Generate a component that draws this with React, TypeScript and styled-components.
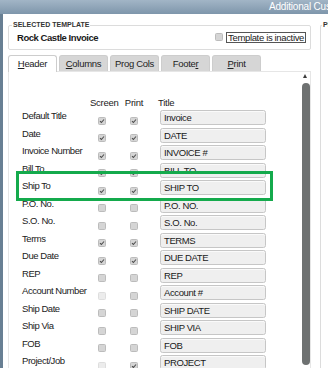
import styled, { createGlobalStyle } from 'styled-components';

type Mark = 'on' | 'off' | 'dim';

type FieldRow = {
  label: string;
  screen: Mark;
  print: Mark;
  title: string;
};

const rows: FieldRow[] = [
  { label: 'Default Title', screen: 'on', print: 'on', title: 'Invoice' },
  { label: 'Date', screen: 'on', print: 'on', title: 'DATE' },
  { label: 'Invoice Number', screen: 'on', print: 'on', title: 'INVOICE #' },
  { label: 'Bill To', screen: 'on', print: 'on', title: 'BILL TO' },
  { label: 'Ship To', screen: 'on', print: 'on', title: 'SHIP TO' },
  { label: 'P.O. No.', screen: 'off', print: 'off', title: 'P.O. NO.' },
  { label: 'S.O. No.', screen: 'off', print: 'off', title: 'S.O. No.' },
  { label: 'Terms', screen: 'on', print: 'on', title: 'TERMS' },
  { label: 'Due Date', screen: 'on', print: 'on', title: 'DUE DATE' },
  { label: 'REP', screen: 'off', print: 'off', title: 'REP' },
  { label: 'Account Number', screen: 'dim', print: 'off', title: 'Account #' },
  { label: 'Ship Date', screen: 'off', print: 'off', title: 'SHIP DATE' },
  { label: 'Ship Via', screen: 'off', print: 'off', title: 'SHIP VIA' },
  { label: 'FOB', screen: 'off', print: 'off', title: 'FOB' },
  { label: 'Project/Job', screen: 'dim', print: 'on', title: 'PROJECT' },
];

const tabs = [
  { key: 'header', node: <><u>H</u>eader</> },
  { key: 'columns', node: <><u>C</u>olumns</> },
  { key: 'prog', node: <>Pro<u>g</u> Cols</> },
  { key: 'footer', node: <>Foote<u>r</u></> },
  { key: 'print', node: <><u>P</u>rint</> },
];

const Check = ({ state }: { state: Mark }) => (
  <StyledUi.Box $state={state}>
    {state === 'on' && (
      <svg width="6" height="6" viewBox="0 0 6 6">
        <path d="M1 3.1 L2.4 4.5 L5 1.5" stroke="#4d4d4d" strokeWidth="1.1" fill="none" />
      </svg>
    )}
  </StyledUi.Box>
);

export default function App() {
  return (
    <>
      <GlobalStyle />
      <StyledUi.Window>
        <StyledUi.TitleBar>Additional Customization</StyledUi.TitleBar>
        <StyledUi.Body>
          <StyledUi.Main>
            <StyledUi.Group>
              <StyledUi.Legend>SELECTED TEMPLATE</StyledUi.Legend>
              <StyledUi.TemplateRow>
                <StyledUi.TemplateName>Rock Castle Invoice</StyledUi.TemplateName>
                <StyledUi.Inactive>
                  <Check state="off" />
                  <StyledUi.InactiveLabel>Template is inactive</StyledUi.InactiveLabel>
                </StyledUi.Inactive>
              </StyledUi.TemplateRow>
            </StyledUi.Group>

            <StyledUi.Tabs>
              {tabs.map((t, i) => (
                <StyledUi.Tab key={t.key} $active={i === 0}>
                  {t.node}
                </StyledUi.Tab>
              ))}
            </StyledUi.Tabs>

            <StyledUi.Panel>
              <StyledUi.Grid>
                <span />
                <StyledUi.HeadCell>Screen</StyledUi.HeadCell>
                <StyledUi.HeadCell>Print</StyledUi.HeadCell>
                <StyledUi.HeadCell $left>Title</StyledUi.HeadCell>
                {rows.map((r) => (
                  <StyledUi.Row key={r.label}>
                    <StyledUi.Label>{r.label}</StyledUi.Label>
                    <StyledUi.CheckCell>
                      <Check state={r.screen} />
                    </StyledUi.CheckCell>
                    <StyledUi.CheckCell>
                      <Check state={r.print} />
                    </StyledUi.CheckCell>
                    <StyledUi.TitleField>{r.title}</StyledUi.TitleField>
                  </StyledUi.Row>
                ))}
              </StyledUi.Grid>
              <StyledUi.Scrollbar>
                <StyledUi.Arrow />
                <StyledUi.Thumb />
              </StyledUi.Scrollbar>
            </StyledUi.Panel>
          </StyledUi.Main>

          <StyledUi.Side>
            <StyledUi.SideGroup>
              <StyledUi.Legend>PREVIEW</StyledUi.Legend>
            </StyledUi.SideGroup>
          </StyledUi.Side>
        </StyledUi.Body>

        <StyledUi.Highlight />
      </StyledUi.Window>
    </>
  );
}

const GlobalStyle = createGlobalStyle`
  body {
    margin: 0;
    background: #fff;
  }
`;

const StyledUi = {
  Window: styled.div`
    position: relative;
    display: flex;
    flex-direction: column;
    width: 328px;
    height: 368px;
    overflow: hidden;
    background: #fff;
    font-family: 'Liberation Sans', Arial, sans-serif;
    color: #222;
  `,
  TitleBar: styled.div`
    flex-shrink: 0;
    height: 14px;
    padding-left: 269px;
    background: linear-gradient(#a2b5c6, #7e96ab);
    color: #fff;
    font-size: 10px;
    line-height: 14px;
    letter-spacing: -0.2px;
    white-space: nowrap;
  `,
  Body: styled.div`
    flex: 1;
    display: flex;
    min-height: 0;
    border-left: 3px solid #687f93;
  `,
  Main: styled.div`
    display: flex;
    flex-direction: column;
    width: 313px;
    flex-shrink: 0;
    padding: 7px 5px 0;
    box-sizing: border-box;
  `,
  Group: styled.fieldset`
    margin: 0;
    padding: 2px 4px 6px 3px;
    min-width: 0;
    border: 1px solid #dcdcdc;
    border-radius: 2px;
  `,
  Legend: styled.legend`
    padding: 0 1px;
    font-size: 7px;
    line-height: 8px;
    font-weight: bold;
    color: #333;
    white-space: nowrap;
  `,
  TemplateRow: styled.div`
    display: flex;
    align-items: center;
    justify-content: space-between;
    height: 12px;
    padding-left: 5px;
  `,
  TemplateName: styled.span`
    font-size: 9.5px;
    font-weight: bold;
    letter-spacing: -0.45px;
    color: #1a1a1a;
  `,
  Inactive: styled.div`
    display: flex;
    align-items: center;
    gap: 3px;
  `,
  InactiveLabel: styled.span`
    height: 9px;
    padding: 0 1px;
    border: 1px solid #555;
    font-size: 9.5px;
    line-height: 9px;
    letter-spacing: -0.35px;
    color: #222;
  `,
  Tabs: styled.div`
    display: flex;
    gap: 2px;
    height: 16px;
    margin-top: 5px;
    position: relative;
    z-index: 1;
  `,
  Tab: styled.div<{ $active?: boolean }>`
    width: 49px;
    height: ${(p) => (p.$active ? '17px' : '16px')};
    box-sizing: border-box;
    border: 1px solid #cdcdcd;
    border-bottom: none;
    border-radius: 3px 3px 0 0;
    background: ${(p) => (p.$active ? '#fff' : '#d6d6d6')};
    font-size: 9.5px;
    line-height: 15px;
    letter-spacing: -0.3px;
    text-align: center;
    color: #222;
  `,
  Panel: styled.div`
    flex: 1;
    display: flex;
    min-height: 0;
    border: 1px solid #e6e6e6;
    border-bottom: none;
  `,
  Grid: styled.div`
    flex: 1;
    display: grid;
    grid-template-columns: 60px 24px 24px 112px;
    grid-template-rows: 11px;
    grid-auto-rows: 17.5px;
    column-gap: 8px;
    align-content: start;
    padding: 25.5px 0 0 13px;
  `,
  HeadCell: styled.span<{ $left?: boolean }>`
    font-size: 9.5px;
    line-height: 10px;
    letter-spacing: -0.25px;
    text-align: ${(p) => (p.$left ? 'left' : 'center')};
    padding-left: ${(p) => (p.$left ? '4px' : '0')};
    white-space: nowrap;
  `,
  Row: styled.div`
    display: contents;
  `,
  Label: styled.span`
    padding-top: 2.5px;
    font-size: 9.5px;
    line-height: 10px;
    letter-spacing: -0.45px;
    white-space: nowrap;
    color: #222;
  `,
  CheckCell: styled.div`
    display: flex;
    justify-content: center;
    padding-top: 8px;
  `,
  Box: styled.span<{ $state: Mark }>`
    display: flex;
    align-items: center;
    justify-content: center;
    width: 8px;
    height: 8px;
    box-sizing: border-box;
    border: 1px solid ${(p) => (p.$state === 'dim' ? '#dedede' : '#bcbcbc')};
    border-radius: 1.5px;
    background: ${(p) => (p.$state === 'dim' ? '#ececec' : '#d5d5d5')};
  `,
  TitleField: styled.div`
    justify-self: end;
    width: 106px;
    height: 15px;
    margin-top: 1.5px;
    box-sizing: border-box;
    padding-left: 3px;
    border: 1px solid #c6c6c6;
    border-radius: 2.5px;
    background: #efefef;
    box-shadow: inset 0 1px 0 #fafafa;
    font-size: 9.5px;
    line-height: 13px;
    letter-spacing: -0.4px;
    color: #1a1a1a;
    white-space: nowrap;
  `,
  Scrollbar: styled.div`
    display: flex;
    flex-direction: column;
    align-items: center;
    width: 11px;
    padding-top: 2px;
  `,
  Arrow: styled.span`
    width: 0;
    height: 0;
    border-left: 2.5px solid transparent;
    border-right: 2.5px solid transparent;
    border-bottom: 4px solid #3c3c3c;
  `,
  Thumb: styled.span`
    width: 8px;
    height: 282px;
    margin-top: 5px;
    margin-left: 2px;
    border-radius: 4px;
    background: #6e7171;
  `,
  Side: styled.div`
    flex: 1;
    display: flex;
    min-width: 0;
    padding: 7px 0 0 4px;
  `,
  SideGroup: styled.fieldset`
    flex: 1;
    margin: 0;
    padding: 0 0 0 1px;
    min-width: 0;
    border: 1px solid #dcdcdc;
    border-right: none;
    border-bottom: none;
    border-radius: 2px 0 0 0;
  `,
  Highlight: styled.div`
    position: absolute;
    left: 16px;
    top: 171px;
    width: 257px;
    height: 30px;
    box-sizing: border-box;
    border: 3px solid #14aa4c;
    pointer-events: none;
  `,
};
